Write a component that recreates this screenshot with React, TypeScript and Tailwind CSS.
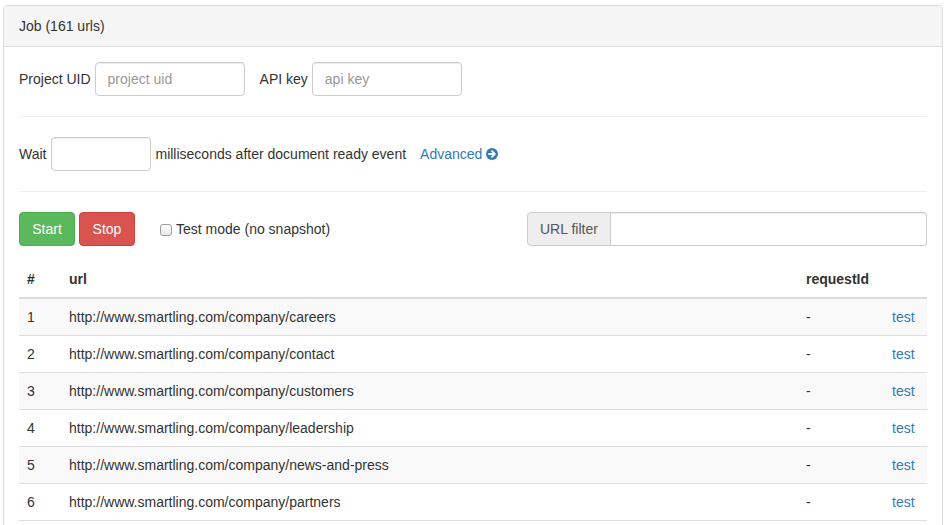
import React from "react";

const urls = [
  "http://www.smartling.com/company/careers",
  "http://www.smartling.com/company/contact",
  "http://www.smartling.com/company/customers",
  "http://www.smartling.com/company/leadership",
  "http://www.smartling.com/company/news-and-press",
  "http://www.smartling.com/company/partners",
];

const inputCls =
  "h-[34px] border border-[#ccc] rounded-[4px] px-3 text-[14px] text-[#555] placeholder:text-[#999] shadow-[inset_0_1px_1px_rgba(0,0,0,0.075)] outline-none bg-white";

function ArrowCircle() {
  return (
    <svg width="12" height="12" viewBox="0 0 12 12" className="inline-block">
      <circle cx="6" cy="6" r="6" fill="#337ab7" />
      <path d="M3 6h5M6 3.2L8.8 6 6 8.8" stroke="#fff" strokeWidth="1.8" fill="none" strokeLinecap="round" strokeLinejoin="round" />
    </svg>
  );
}

export default function App() {
  return (
    <div
      className="min-h-screen bg-white pt-[5px] pl-[3px] text-[14px] leading-[20px] text-[#333]"
      style={{ fontFamily: '"Liberation Sans", Arial, sans-serif' }}
    >
      <div className="w-[940px] border border-[#ddd] rounded-[4px] overflow-hidden">
        <div className="h-[41px] bg-[#f5f5f5] border-b border-[#ddd] px-[15px] flex items-center text-[14px]">
          Job (161 urls)
        </div>

        <div className="p-[15px]">
          {/* credentials */}
          <div className="flex items-center h-[34px]">
            <span>Project UID</span>
            <input className={`${inputCls} w-[150px] ml-[4px]`} placeholder="project uid" />
            <span className="ml-[15px]">API key</span>
            <input className={`${inputCls} w-[150px] ml-[4px]`} placeholder="api key" />
          </div>

          <hr className="my-[20px] border-0 border-t border-[#eee]" />

          <div className="flex items-center h-[34px]">
            <span>Wait</span>
            <input className={`${inputCls} w-[100px] ml-[5px]`} />
            <span className="ml-[4px]">milliseconds after document ready event</span>
            <a className="ml-[14px] text-[#337ab7] flex items-center gap-[4px] cursor-pointer">
              Advanced <ArrowCircle />
            </a>
          </div>

          <hr className="my-[20px] border-0 border-t border-[#eee]" />

          <div className="flex items-center h-[34px]">
            <button className="h-[34px] w-[56px] rounded-[4px] bg-[#5cb85c] border border-[#4cae4c] text-white">
              Start
            </button>
            <button className="h-[34px] w-[56px] ml-[4px] rounded-[4px] bg-[#d9534f] border border-[#d43f3a] text-white">
              Stop
            </button>
            <label className="flex items-center ml-[25px]">
              <span className="w-[12px] h-[12px] rounded-[3px] border border-[#9a9a9a] bg-gradient-to-b from-white to-[#e8e8e8] mr-[4px] mt-[1px]" />
              Test mode (no snapshot)
            </label>
            <div className="ml-auto flex w-[400px] h-[34px]">
              <span className="w-[84px] flex items-center px-3 bg-[#eee] border border-[#ccc] rounded-l-[4px] text-[#555]">
                URL filter
              </span>
              <input className="flex-1 h-[34px] border border-l-0 border-[#ccc] rounded-r-[4px] px-3 shadow-[inset_0_1px_1px_rgba(0,0,0,0.075)] outline-none" />
            </div>
          </div>

          <table className="w-full mt-[15px] border-collapse">
            <thead>
              <tr className="border-b-2 border-[#ddd]">
                <th className="text-left font-bold p-2 w-[42px]">#</th>
                <th className="text-left font-bold p-2">url</th>
                <th className="text-left font-bold p-2 w-[86px]">requestId</th>
                <th className="text-left font-bold p-2 w-[43px]"></th>
              </tr>
            </thead>
            <tbody>
              {urls.map((u, i) => (
                <tr key={u} className={`border-t border-b border-[#ddd] ${i % 2 === 0 ? "bg-[#f9f9f9]" : ""}`}>
                  <td className="p-2">{i + 1}</td>
                  <td className="p-2">{u}</td>
                  <td className="p-2">-</td>
                  <td className="p-2">
                    <a className="text-[#337ab7] cursor-pointer">test</a>
                  </td>
                </tr>
              ))}
            </tbody>
          </table>
        </div>
      </div>
    </div>
  );
}
